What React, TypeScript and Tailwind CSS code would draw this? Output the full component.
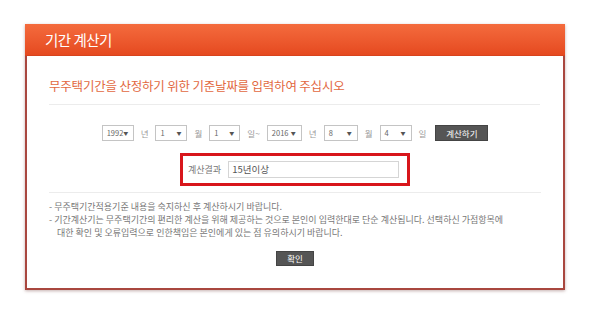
const font = { fontFamily: '"Noto Sans CJK KR", "Noto Sans", sans-serif' }

function Select({ value, w }: { value: string; w: string }) {
  return (
    <div
      className={`${w} h-[16px] border border-[#c4c4c4] bg-white flex items-center justify-between pl-[4px] pr-[5px] text-[7.5px] text-[#666]`}
    >
      <span>{value}</span>
      <span className="text-[5px] text-[#555]">▼</span>
    </div>
  )
}

function Label({ children }: { children: string }) {
  return <span className="text-[8.5px] text-[#999] leading-none">{children}</span>
}

export default function App() {
  return (
    <div className="w-[593px] h-[316px] bg-white pt-[24px] pl-[25px]" style={font}>
      <div className="w-[540px] h-[266px] border-2 border-t-0 border-[#a9473f] shadow-[0_1px_3px_rgba(90,30,25,0.35)] bg-white flex flex-col">
        <div className="h-[32px] -mx-[2px] bg-gradient-to-b from-[#f46b3d] to-[#e5491f] border-b border-[#d7431d] flex items-center pl-[20px]">
          <span className="text-white text-[14.5px] tracking-[-0.5px]">기간 계산기</span>
        </div>

        <div className="flex flex-col px-[22px]">
          <div className="mt-[23px] text-[12.5px] leading-[14px] text-[#e2683f] tracking-[-0.2px]">
            무주택기간을 산정하기 위한 기준날짜를 입력하여 주십시오
          </div>
          <div className="mt-[11px] h-px bg-[#ececec] mr-[1px]" />

          <div className="mt-[20px] flex items-center justify-center gap-[7px]">
            <Select value="1992" w="w-[32px]" />
            <Label>년</Label>
            <Select value="1" w="w-[32px]" />
            <Label>월</Label>
            <Select value="1" w="w-[31px]" />
            <Label>일~</Label>
            <Select value="2016" w="w-[35px]" />
            <Label>년</Label>
            <Select value="8" w="w-[34px]" />
            <Label>월</Label>
            <Select value="4" w="w-[32px]" />
            <Label>일</Label>
            <button className="ml-[2px] w-[53px] h-[16px] bg-[#555] border border-[#444] text-white text-[8.5px] leading-none">
              계산하기
            </button>
          </div>

          <div className="mt-[12px] self-center w-[230px] h-[33px] border-[3px] border-[#d8161b] flex items-center pl-[5px] pr-[8px] gap-[7px]">
            <span className="text-[9px] text-[#777] whitespace-nowrap">계산결과</span>
            <div className="flex-1 h-[17px] border border-[#d5d5d5] bg-white flex items-center pl-[3px] text-[9.5px] text-[#555]">
              15년이상
            </div>
          </div>

          <div className="mt-[6px] h-px bg-[#ececec]" />

          <div className="mt-[7px] text-[9px] leading-[13px] text-[#777]">
            <p>- 무주택기간적용기준 내용을 숙지하신 후 계산하시기 바랍니다.</p>
            <p>
              - 기간계산기는 무주택기간의 편리한 계산을 위해 제공하는 것으로 본인이 입력한대로 단순 계산됩니다. 선택하신 가점항목에
            </p>
            <p className="pl-[8px]">대한 확인 및 오류입력으로 인한책임은 본인에게 있는 점 유의하시기 바랍니다.</p>
          </div>

          <button className="mt-[12px] self-center w-[38px] h-[15px] bg-[#555] border border-[#444] text-white text-[8.5px] leading-none">
            확인
          </button>
        </div>
      </div>
    </div>
  )
}
